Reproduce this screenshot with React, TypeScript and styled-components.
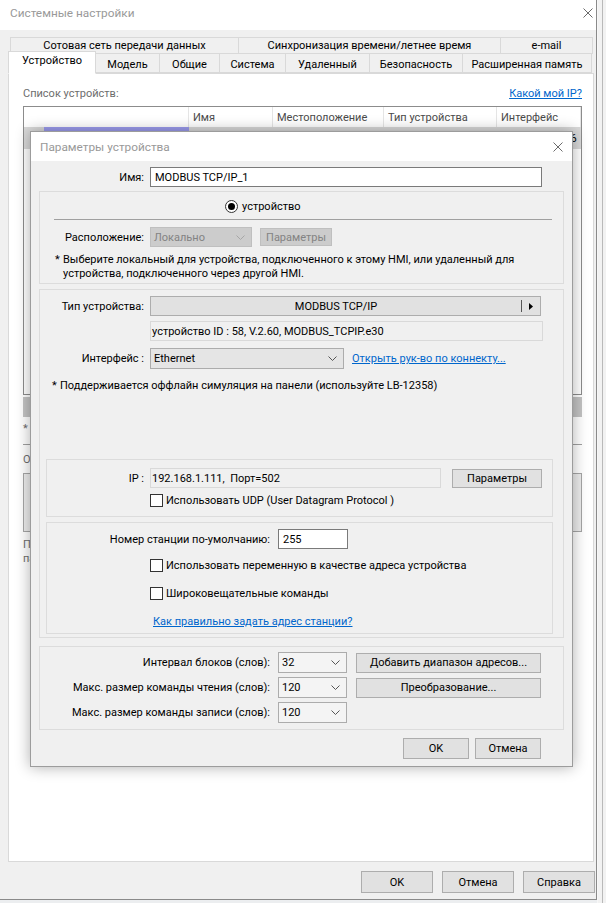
import styled, { createGlobalStyle, css } from "styled-components";

const GlobalStyle = createGlobalStyle`
  html, body {
    margin: 0;
    padding: 0;
  }
  body {
    font-family: Roboto, "Liberation Sans", sans-serif;
    font-size: 11px;
    color: #000;
    background: #eceef0;
  }
  * {
    box-sizing: border-box;
  }
`;

const Page = styled.div`
  width: 606px;
  height: 903px;
  overflow: hidden;
  display: flex;
`;

const Window = styled.div`
  position: relative;
  width: 597px;
  height: 900px;
  flex-shrink: 0;
  background: #f0f0f0;
  border-right: 1px solid #8a8a8a;
  border-bottom: 1px solid #8a8a8a;
  display: flex;
  flex-direction: column;
`;

const Backdrop = styled.div`
  flex: 1;
  border-left: 1px solid #f7f7f7;
  background: linear-gradient(90deg, #f2f2f2 0 4px, #b9b9b9 4px 5px, #f2f2f2 5px);
`;

const TitleBar = styled.div<{ $h: number; $pr: number; $pl: number; $pb?: number }>`
  height: ${(p) => p.$h}px;
  flex-shrink: 0;
  background: #fff;
  display: flex;
  align-items: center;
  justify-content: space-between;
  padding: 0 ${(p) => p.$pr}px ${(p) => p.$pb ?? 0}px ${(p) => p.$pl}px;
  color: #999;
  font-size: 11.8px;
`;

const TabStrip = styled.div`
  padding: 7px 0 0 8px;
  display: flex;
  flex-direction: column;
`;

const TabRow = styled.div<{ $indent: number; $h: number; $mt?: number }>`
  display: flex;
  align-items: flex-end;
  height: ${(p) => p.$h}px;
  padding-left: ${(p) => p.$indent}px;
  margin-top: ${(p) => p.$mt ?? 0}px;
`;

const Tab = styled.div<{ $w: number; $active?: boolean; $drop?: number }>`
  width: ${(p) => p.$w}px;
  height: 100%;
  margin-left: -1px;
  border: 1px solid #d9d9d9;
  background: #f0f0f0;
  display: flex;
  align-items: center;
  justify-content: center;
  padding-top: ${(p) => p.$drop ?? 0}px;
  white-space: nowrap;
  &:first-child {
    margin-left: 0;
  }
  ${(p) =>
    p.$active &&
    css`
      position: relative;
      z-index: 1;
      height: calc(100% + 3px);
      margin-bottom: -1px;
      padding-top: 0;
      padding-bottom: 4px;
      background: #fff;
      border-bottom-color: #fff;
    `}
`;

const Panel = styled.div`
  height: 789px;
  margin: 0 2px 0 8px;
  background: #fff;
  border: 1px solid #d9d9d9;
  padding: 13px 11px 0 14px;
  display: flex;
  flex-direction: column;
`;

const PanelHeader = styled.div`
  display: flex;
  justify-content: space-between;
  line-height: 14px;
  color: #6d6d6d;
`;

const Link = styled.a<{ $ml?: number }>`
  color: #0066cc;
  text-decoration: underline;
  margin-left: ${(p) => p.$ml ?? 0}px;
  white-space: nowrap;
  cursor: pointer;
`;

const Table = styled.div`
  margin-top: 5px;
  height: 289px;
  border: 1px solid #8c8c8c;
  display: flex;
  flex-direction: column;
  overflow: hidden;
`;

const TableLine = styled.div<{ $h: number }>`
  display: flex;
  height: ${(p) => p.$h}px;
`;

const Cell = styled.div<{ $w?: number; $head?: boolean }>`
  width: ${(p) => (p.$w ? `${p.$w}px` : "auto")};
  flex: ${(p) => (p.$w ? "0 0 auto" : "1")};
  display: flex;
  align-items: center;
  padding-left: 4px;
  white-space: nowrap;
  overflow: hidden;
  ${(p) =>
    p.$head
      ? css`
          border-right: 1px solid #e5e5e5;
          color: #4a4a4a;
        `
      : css`
          background: #d9d9d9;
        `}
`;

const Highlight = styled.div`
  flex: 1;
  height: 100%;
  background: #9c9cee;
  margin-left: 16px;
`;

const GreyBlock = styled.div`
  margin-top: 2px;
  height: 20px;
  background: #c3c3c3;
`;

const PanelText = styled.div<{ $mt: number }>`
  margin-top: ${(p) => p.$mt}px;
  line-height: 14px;
  color: #6d6d6d;
`;

const Rule = styled.div<{ $mt: number; $ml?: number; $mr?: number; $c?: string }>`
  margin: ${(p) => p.$mt}px ${(p) => p.$mr ?? 0}px 0 ${(p) => p.$ml ?? 0}px;
  height: 1px;
  flex-shrink: 0;
  background: ${(p) => p.$c ?? "#a0a0a0"};
`;

const PreviewBox = styled.div`
  margin-top: 6px;
  height: 59px;
  border: 1px solid #a6a6a6;
  background: #ececec;
`;

const Footer = styled.div`
  display: flex;
  justify-content: flex-end;
  gap: 9px;
  padding: 9px 1px 0 0;
`;

const Button = styled.button<{ $w: number; $h: number; $ml?: number }>`
  width: ${(p) => p.$w}px;
  height: ${(p) => p.$h}px;
  margin-left: ${(p) => p.$ml ?? 0}px;
  flex-shrink: 0;
  padding: 0;
  font: inherit;
  color: #000;
  background: #e1e1e1;
  border: 1px solid #adadad;
  white-space: nowrap;
  &:disabled {
    background: #cccccc;
    border-color: #bfbfbf;
    color: #838383;
  }
`;

const Dialog = styled.div`
  position: absolute;
  left: 30px;
  top: 131px;
  width: 543px;
  height: 636px;
  background: #f0f0f0;
  border: 1px solid #9c9c9c;
  box-shadow: 0 0 14px rgba(0, 0, 0, 0.32);
  display: flex;
  flex-direction: column;
`;

const DialogBody = styled.div`
  padding: 6px 8px 8px 8px;
  display: flex;
  flex-direction: column;
`;

const Row = styled.div<{ $gap?: number; $mt?: number; $pl?: number; $h?: number }>`
  display: flex;
  align-items: center;
  gap: ${(p) => p.$gap ?? 6}px;
  margin-top: ${(p) => p.$mt ?? 0}px;
  padding-left: ${(p) => p.$pl ?? 0}px;
  height: ${(p) => (p.$h ? `${p.$h}px` : "auto")};
  flex-shrink: 0;
  white-space: nowrap;
`;

const Label = styled.span<{ $w: number }>`
  width: ${(p) => p.$w}px;
  flex-shrink: 0;
  text-align: right;
  white-space: nowrap;
`;

const Group = styled.div<{ $mt?: number; $pt: number; $pb: number; $ml?: number; $mr?: number }>`
  margin: ${(p) => p.$mt ?? 0}px ${(p) => p.$mr ?? 0}px 0 ${(p) => p.$ml ?? 0}px;
  padding: ${(p) => p.$pt}px 0 ${(p) => p.$pb}px 0;
  border: 1px solid #dcdcdc;
  display: flex;
  flex-direction: column;
  flex-shrink: 0;
`;

const TextBox = styled.div<{ $w: number; $readonly?: boolean }>`
  width: ${(p) => p.$w}px;
  height: 20px;
  flex-shrink: 0;
  display: flex;
  align-items: center;
  white-space: nowrap;
  border: 1px solid ${(p) => (p.$readonly ? "#d9d9d9" : "#7a7a7a")};
  background: ${(p) => (p.$readonly ? "#f0f0f0" : "#fff")};
  padding-left: ${(p) => (p.$readonly ? 1 : 4)}px;
`;

const Combo = styled.div<{ $w: number; $h?: number; $tone: "grey" | "light" | "off" }>`
  width: ${(p) => p.$w}px;
  height: ${(p) => p.$h ?? 21}px;
  flex-shrink: 0;
  display: flex;
  align-items: center;
  justify-content: space-between;
  padding: 0 6px 0 3px;
  border: 1px solid ${(p) => (p.$tone === "off" ? "#bfbfbf" : "#acacac")};
  background: ${(p) => (p.$tone === "off" ? "#cccccc" : p.$tone === "grey" ? "#e5e5e5" : "#f4f4f4")};
  color: ${(p) => (p.$tone === "off" ? "#838383" : "#000")};
`;

const TypeButton = styled.div`
  width: 391px;
  height: 20px;
  display: flex;
  align-items: center;
  background: #e1e1e1;
  border: 1px solid #adadad;
`;

const TypeText = styled.span`
  flex: 1;
  text-align: center;
`;

const TypeArrow = styled.span`
  width: 19px;
  height: 12px;
  border-left: 1px solid #555;
  display: flex;
  align-items: center;
  justify-content: center;
`;

const Radio = styled.span`
  width: 13px;
  height: 13px;
  border: 1px solid #333;
  border-radius: 50%;
  background: #fff;
  display: flex;
  align-items: center;
  justify-content: center;
  &::after {
    content: "";
    width: 7px;
    height: 7px;
    border-radius: 50%;
    background: #000;
  }
`;

const CheckBox = styled.span`
  width: 13px;
  height: 13px;
  flex-shrink: 0;
  border: 1px solid #333;
  background: #fff;
`;

const Note = styled.div<{ $mt: number; $pl: number }>`
  display: flex;
  flex-shrink: 0;
  margin-top: ${(p) => p.$mt}px;
  padding-left: ${(p) => p.$pl}px;
  line-height: 14px;
`;

const Star = styled.span`
  width: 8px;
  flex-shrink: 0;
`;

const DialogButtons = styled.div`
  display: flex;
  justify-content: flex-end;
  gap: 6px;
  margin: 8px 23px 0 0;
`;

function CloseIcon() {
  return (
    <svg width="10" height="10" viewBox="0 0 10 10">
      <path d="M0.5 0.5 L9.5 9.5 M9.5 0.5 L0.5 9.5" stroke="#6b6b6b" strokeWidth="1" fill="none" />
    </svg>
  );
}

function Chevron({ color = "#555" }: { color?: string }) {
  return (
    <svg width="9" height="5" viewBox="0 0 9 5">
      <path d="M0.5 0.5 L4.5 4.5 L8.5 0.5" stroke={color} strokeWidth="1" fill="none" />
    </svg>
  );
}

const backTabs = [
  { w: 229, t: "Сотовая сеть передачи данных" },
  { w: 263, t: "Синхронизация времени/летнее время" },
  { w: 93, t: "e-mail" },
];

const frontTabs = [
  { w: 88, t: "Устройство" },
  { w: 65, t: "Модель" },
  { w: 61, t: "Общие" },
  { w: 67, t: "Система" },
  { w: 85, t: "Удаленный" },
  { w: 94, t: "Безопасность" },
  { w: 130, t: "Расширенная память" },
];

function DeviceDialog() {
  return (
    <Dialog>
      <TitleBar $h={29} $pr={9} $pl={9}>
        <span>Параметры устройства</span>
        <CloseIcon />
      </TitleBar>
      <DialogBody>
        <Row $h={20}>
          <Label $w={105}>Имя:</Label>
          <TextBox $w={392}>MODBUS TCP/IP_1</TextBox>
        </Row>

        <Group $mt={4} $pt={8} $pb={2}>
          <Row $gap={4} $pl={185} $h={13}>
            <Radio />
            <span>устройство</span>
          </Row>
          <Rule $mt={6} $ml={14} $mr={11} />
          <Row $mt={7} $h={20}>
            <Label $w={104}>Расположение:</Label>
            <Combo $w={102} $h={20} $tone="off">
              <span>Локально</span>
              <Chevron color="#a6a6a6" />
            </Combo>
            <Button $w={72} $h={18} $ml={2} disabled>
              Параметры
            </Button>
          </Row>
          <Note $mt={6} $pl={15}>
            <Star>*</Star>
            <span>
              Выберите локальный для устройства, подключенного к этому HMI, или удаленный для
              <br />
              устройства, подключенного через другой HMI.
            </span>
          </Note>
        </Group>

        <Group $mt={5} $pt={6} $pb={3}>
          <Row $h={20}>
            <Label $w={104}>Тип устройства:</Label>
            <TypeButton>
              <TypeText>MODBUS TCP/IP</TypeText>
              <TypeArrow>
                <svg width="4" height="7" viewBox="0 0 4 7">
                  <path d="M0 0 L4 3.5 L0 7 Z" fill="#000" />
                </svg>
              </TypeArrow>
            </TypeButton>
          </Row>
          <Row $mt={5} $pl={110} $h={20}>
            <TextBox $w={393} $readonly>
              устройство ID : 58, V.2.60, MODBUS_TCPIP.e30
            </TextBox>
          </Row>
          <Row $mt={7} $h={21}>
            <Label $w={104}>Интерфейс :</Label>
            <Combo $w={194} $tone="grey">
              <span>Ethernet</span>
              <Chevron />
            </Combo>
            <Link $ml={2}>Открыть рук-во по коннекту...</Link>
          </Row>
          <Note $mt={10} $pl={12}>
            <Star>*</Star>
            <span>Поддерживается оффлайн симуляция на панели (используйте LB-12358)</span>
          </Note>

          <Group $mt={66} $pt={8} $pb={9} $ml={6} $mr={10}>
            <Row $h={20}>
              <Label $w={97}>IP :</Label>
              <TextBox $w={291} $readonly>
                192.168.1.111,&nbsp; Порт=502
              </TextBox>
              <Button $w={90} $h={19} $ml={5}>
                Параметры
              </Button>
            </Row>
            <Row $mt={6} $gap={3} $pl={103} $h={13}>
              <CheckBox />
              <span>Использовать UDP (User Datagram Protocol )</span>
            </Row>
          </Group>

          <Group $mt={5} $pt={6} $pb={5} $ml={6} $mr={10}>
            <Row $gap={8} $h={20}>
              <Label $w={223}>Номер станции по-умолчанию:</Label>
              <TextBox $w={70}>255</TextBox>
            </Row>
            <Row $mt={10} $gap={3} $pl={103} $h={13}>
              <CheckBox />
              <span>Использовать переменную в качестве адреса устройства</span>
            </Row>
            <Row $mt={15} $gap={3} $pl={103} $h={13}>
              <CheckBox />
              <span>Широковещательные команды</span>
            </Row>
            <Row $mt={14} $pl={106} $h={14}>
              <Link>Как правильно задать адрес станции?</Link>
            </Row>
          </Group>
        </Group>

        <Group $mt={8} $pt={5} $pb={6}>
          <Row $gap={8} $h={21}>
            <Label $w={230}>Интервал блоков (слов):</Label>
            <Combo $w={69} $tone="light">
              <span>32</span>
              <Chevron />
            </Combo>
            <Button $w={185} $h={20} $ml={1}>
              Добавить диапазон адресов...
            </Button>
          </Row>
          <Row $gap={8} $mt={4} $h={21}>
            <Label $w={230}>Макс. размер команды чтения (слов):</Label>
            <Combo $w={69} $tone="light">
              <span>120</span>
              <Chevron />
            </Combo>
            <Button $w={185} $h={20} $ml={1}>
              Преобразование...
            </Button>
          </Row>
          <Row $gap={8} $mt={4} $h={21}>
            <Label $w={230}>Макс. размер команды записи (слов):</Label>
            <Combo $w={69} $tone="light">
              <span>120</span>
              <Chevron />
            </Combo>
          </Row>
        </Group>

        <DialogButtons>
          <Button $w={66} $h={21}>
            OK
          </Button>
          <Button $w={66} $h={21}>
            Отмена
          </Button>
        </DialogButtons>
      </DialogBody>
    </Dialog>
  );
}

export default function App() {
  return (
    <>
      <GlobalStyle />
      <Page>
        <Window>
          <TitleBar $h={30} $pr={3} $pl={10} $pb={4}>
            <span>Системные настройки</span>
            <CloseIcon />
          </TitleBar>

          <TabStrip>
            <TabRow $indent={2} $h={17}>
              {backTabs.map((t) => (
                <Tab key={t.t} $w={t.w}>
                  {t.t}
                </Tab>
              ))}
            </TabRow>
            <TabRow $indent={0} $h={20} $mt={-1}>
              {frontTabs.map((t, i) => (
                <Tab key={t.t} $w={t.w} $active={i === 0} $drop={3}>
                  {t.t}
                </Tab>
              ))}
            </TabRow>
          </TabStrip>

          <Panel>
            <PanelHeader>
              <span>Список устройств:</span>
              <Link>Какой мой IP?</Link>
            </PanelHeader>
            <Table>
              <TableLine $h={20}>
                <Cell $w={165} $head />
                <Cell $w={84} $head>
                  Имя
                </Cell>
                <Cell $w={111} $head>
                  Местоположение
                </Cell>
                <Cell $w={113} $head>
                  Тип устройства
                </Cell>
                <Cell $head>Интерфейс</Cell>
              </TableLine>
              <TableLine $h={22}>
                <Cell $w={165}>
                  <Highlight />
                </Cell>
                <Cell $w={84}>Local HMI</Cell>
                <Cell $w={111}>Локально</Cell>
                <Cell $w={113}>MT8000</Cell>
                <Cell>Ethernet (IP=16</Cell>
              </TableLine>
            </Table>
            <GreyBlock />
            <PanelText $mt={5}>*</PanelText>
            <Rule $mt={8} />
            <PanelText $mt={8}>Описание:</PanelText>
            <PreviewBox />
            <PanelText $mt={6}>
              Примечание:
              <br />
              панель
            </PanelText>
          </Panel>

          <Footer>
            <Button $w={72} $h={22}>
              OK
            </Button>
            <Button $w={72} $h={22}>
              Отмена
            </Button>
            <Button $w={72} $h={22}>
              Справка
            </Button>
          </Footer>

          <DeviceDialog />
        </Window>
        <Backdrop />
      </Page>
    </>
  );
}
